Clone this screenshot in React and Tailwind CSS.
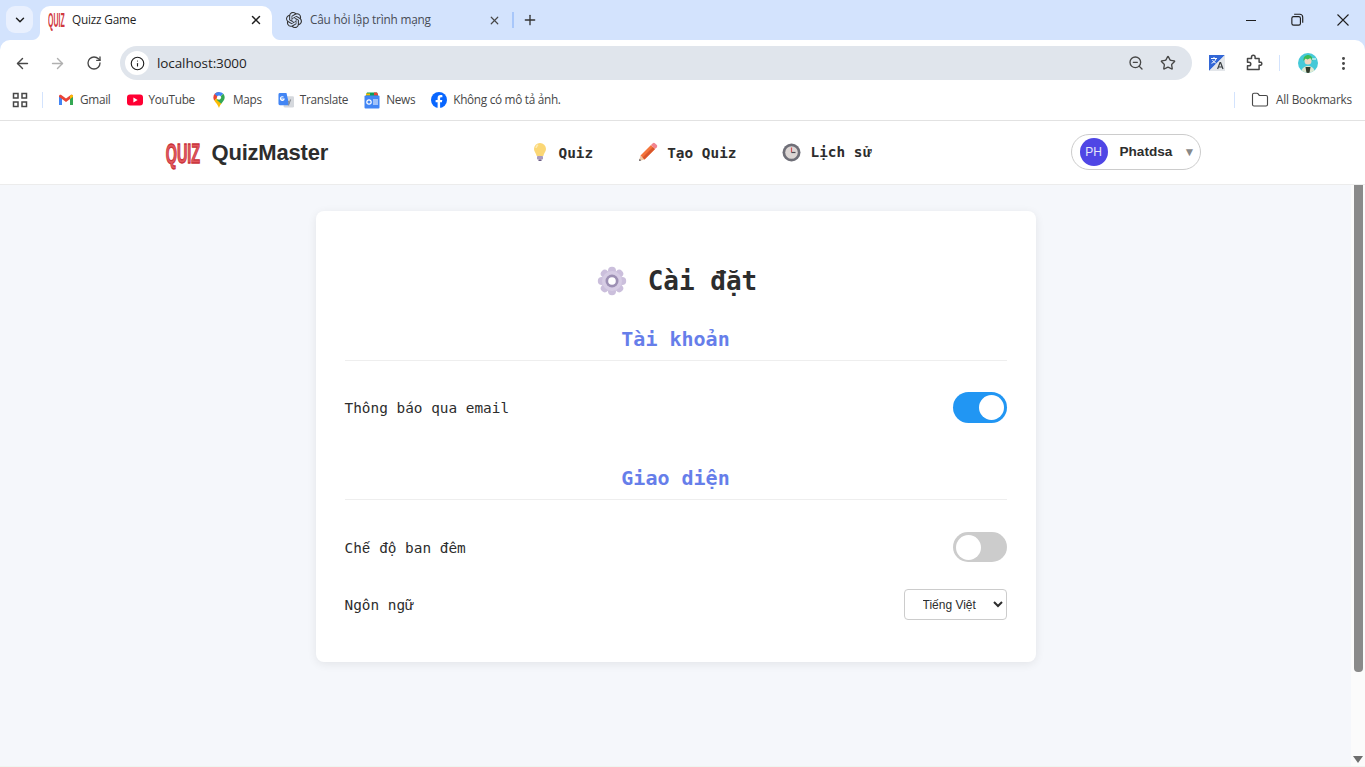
import React from "react";
import { ArrowLeft, ArrowRight, RotateCw, Info, ZoomOut, Star, EllipsisVertical, Folder, X, Plus, ChevronDown } from "lucide-react";
import { SiOpenai } from "react-icons/si";

const mono = "font-['DejaVu_Sans_Mono','Liberation_Mono',monospace]";
const viet = "font-['Liberation_Mono',monospace]";

function QuizLogo({ small }) {
  return (
    <span className={small ? "flex w-[18px] h-[18px] items-center justify-center" : "flex w-[36px] h-[24px] items-center justify-center"}>
      <span className={small
        ? "shrink-0 font-['Liberation_Sans',sans-serif] font-bold text-[#d0393e] text-[12px] leading-[14px] scale-x-[0.58] scale-y-[1.7]"
        : "shrink-0 font-['Liberation_Sans',sans-serif] font-bold text-[#e2585d] text-[20px] leading-[22px] scale-x-[0.72] scale-y-[1.4] [-webkit-text-stroke:0.9px_#c9333a]"}>
        QUIZ
      </span>
    </span>
  );
}

function Gmail() {
  return (
    <svg width="16" height="16" viewBox="0 0 16 16">
      <path d="M1 4.2V13h3V7l4 3 4-3v6h3V4.2c0-1.2-1.4-1.8-2.3-1.1L8 6.6 3.3 3.1C2.4 2.4 1 3 1 4.2z" fill="#ea4335" />
      <path d="M1 4.2V13h3V7L1.2 4.9z" fill="#4285f4" />
      <path d="M15 4.2V13h-3V7l2.8-2.1z" fill="#34a853" />
      <path d="M12 3.9V7l3-2.2v-.6c0-1.2-1.4-1.8-2.3-1.1z" fill="#fbbc04" />
    </svg>
  );
}
function YouTube() {
  return (
    <svg width="16" height="16" viewBox="0 0 16 16">
      <rect x="0" y="2.5" width="16" height="11" rx="3" fill="#ff0033" />
      <path d="M6.4 5.6v4.8L10.6 8z" fill="#fff" />
    </svg>
  );
}
function Maps() {
  return (
    <svg width="16" height="18" viewBox="0 0 16 20">
      <path d="M8 1a6.3 6.3 0 0 0-6.3 6.3c0 1.4.5 2.5 1.2 3.6L8 5.5z" fill="#ea4335" />
      <path d="M2.9 10.9C4.6 13.4 7 15.600 8 19c.6-2 1.600-3.500 2.700-5L5 8z" fill="#fbbc04" />
      <path d="M8 1c-2 0-3.700.9-4.900 2.400L8 7.500l4.700-4.400C11.500 1.800 9.800 1 8 1z" fill="#4285f4" />
      <path d="M12.700 3.100 5.600 10l4.900 4.200c1.700-2.300 3.800-4.100 3.800-6.900 0-1.600-.6-3.100-1.600-4.200z" fill="#34a853" />
      <circle cx="8" cy="7.300" r="2.300" fill="#fff" />
    </svg>
  );
}
function TranslateFav() {
  return (
    <svg width="17" height="17" viewBox="0 0 17 17">
      <rect x="6" y="4" width="11" height="12" rx="1.500" fill="#d5d8dd" />
      <path d="M2 0.500h7l3 13H2a1.500 1.500 0 0 1-1.500-1.500V2A1.500 1.500 0 0 1 2 .5z" fill="#4285f4" />
      <path d="M3 7h3.500a2 2 0 1 1-.6-2" stroke="#fff" strokeWidth="1.100" fill="none" />
      <path d="M11 9l1.200 3.200M13.500 7.500l-2.500 6" stroke="#8a8f96" strokeWidth="1.200" />
    </svg>
  );
}
function NewsFav() {
  return (
    <svg width="16" height="17" viewBox="0 0 16 17">
      <path d="M2 2.500 3 0.500h10l1 2v3H2z" fill="#0c9d58" />
      <path d="M2 1.500h4v2H2z" fill="#fbbc04" />
      <path d="M10 .5h3l1 2v1h-4z" fill="#ea4335" />
      <rect x="0.500" y="3.500" width="15" height="13" rx="1" fill="#4285f4" />
      <circle cx="5" cy="10" r="2.200" fill="none" stroke="#fff" strokeWidth="1.200" />
      <path d="M9 8h5M9 10h5M9 12h5" stroke="#fff" strokeWidth="1" />
    </svg>
  );
}
function Facebook() {
  return (
    <svg width="16" height="16" viewBox="0 0 16 16">
      <circle cx="8" cy="8" r="8" fill="#0866ff" />
      <path d="M10.900 10.300 11.300 8H9.100V6.500c0-.7.300-1.200 1.300-1.200h1V3.300s-.9-.2-1.800-.2C7.700 3.100 6.600 4.200 6.600 6.200V8h-2v2.300h2V16h2.500v-5.700z" fill="#fff" />
    </svg>
  );
}
function LangIcon() {
  return (
    <svg width="16" height="16" viewBox="0 0 16 16">
      <path d="M0 0h16L0 16z" fill="#3367d6" />
      <path d="M16 0v16H0z" fill="#e3e6ea" />
      <path d="M2 3.500h6M5 2v1.500M7 3.500C6.500 6 4.500 7.500 2.500 8.300M3.500 5c.6 1.300 2 2.500 3.300 3" stroke="#fff" strokeWidth="1" fill="none" />
      <path d="M8.600 14 11 7.500h.6L14 14M9.600 12h3.400" stroke="#3c4043" strokeWidth="1.200" fill="none" />
    </svg>
  );
}
function PuzzleIcon() {
  return (
    <svg width="18" height="18" viewBox="0 0 18 18" fill="none" stroke="#474747" strokeWidth="1.500" strokeLinejoin="round">
      <path d="M1.500 4.500h4V3a1.800 1.800 0 0 1 3.600 0v1.500h4v3.700H15a1.800 1.800 0 0 1 0 3h-1.900v4.300H1.500v-3.700H3a1.800 1.800 0 0 0 0-3.600H1.500z" />
    </svg>
  );
}
function Avatar() {
  return (
    <svg width="20" height="20" viewBox="0 0 20 20" className="rounded-full">
      <rect width="20" height="20" fill="#45c9d8" />
      <path d="M3 20c.5-5 3.500-7 7-7s6.500 2 7 7z" fill="#dfe8d2" />
      <path d="M7.500 14h5l-1 6h-3z" fill="#2f3b2b" />
      <circle cx="10" cy="8" r="3.500" fill="#f0d6bf" />
      <path d="M5.500 8c-.5-4 2-6 4.500-6s5 2 4.500 6l-2-3-3 1.500-2-1z" fill="#3cba54" />
      <path d="M14 6h4" stroke="#fff" strokeWidth="1" />
    </svg>
  );
}
function Bulb() {
  return (
    <svg width="18" height="20" viewBox="0 0 18 20">
      <path d="M9 1a6 6 0 0 0-6 6c0 2.600 2 3.700 2.700 7h6.600C13 10.700 15 9.600 15 7a6 6 0 0 0-6-6z" fill="#fbd775" />
      <path d="M7 3a4 4 0 0 0-2 3" stroke="#fdebb5" strokeWidth="1.500" fill="none" />
      <rect x="6" y="14" width="6" height="3.500" rx=".8" fill="#a99bbd" />
      <rect x="7.300" y="17.500" width="3.400" height="1.500" rx=".7" fill="#6b5d85" />
    </svg>
  );
}
function Pencil() {
  return (
    <svg width="20" height="20" viewBox="0 0 20 20">
      <path d="M1 19l1.500-5.500L6.500 17.500z" fill="#f3c9a0" />
      <path d="M1 19l.6-2.200 1.600 1.600z" fill="#5b5b66" />
      <path d="M2.500 13.500 13 3l4 4L6.500 17.500z" fill="#f4743a" />
      <path d="M4.500 15.500 15 5l2 2L6.500 17.500z" fill="#d9562a" />
      <path d="M13 3l1.800-1.800a1.500 1.500 0 0 1 2.100 0l1.900 1.900a1.500 1.500 0 0 1 0 2.100L17 7z" fill="#f2848f" />
    </svg>
  );
}
function ClockEmoji() {
  return (
    <svg width="19" height="19" viewBox="0 0 19 19">
      <circle cx="9.500" cy="9.500" r="9" fill="#6f6f78" />
      <circle cx="9.500" cy="9.500" r="6.300" fill="#dcd6d4" />
      <path d="M9.500 4.500v5" stroke="#d1535b" strokeWidth="1.200" fill="none" />
      <path d="M9.500 9.500h4" stroke="#4a4a52" strokeWidth="1.200" fill="none" />
    </svg>
  );
}
function Gear() {
  const petals = [0, 45, 90, 135, 180, 225, 270, 315];
  return (
    <svg width="30" height="30" viewBox="0 0 30 30">
      {petals.map((a) => (
        <circle key={a} cx="15" cy="4.800" r="4" fill="#cbbfdc" transform={`rotate(${a} 15 15)`} />
      ))}
      <circle cx="15" cy="15" r="10" fill="#d6cce4" />
      <circle cx="15" cy="15" r="6.500" fill="#9d90b4" />
      <circle cx="15" cy="15" r="3.800" fill="#fff" />
    </svg>
  );
}

function Bookmark({ icon, label }) {
  return (
    <div className="flex items-center gap-[6px]">
      <span className="flex w-[16px] h-[18px] items-center justify-center">{icon}</span>
      <span className="text-[11.800px] text-[#474747] font-['Open_Sans','Noto_Sans',sans-serif] tracking-[-0.3px]">{label}</span>
    </div>
  );
}

function NavItem({ icon, children }) {
  return (
    <div className="flex items-center gap-[9px]">
      <span className="flex w-[20px] justify-center">{icon}</span>
      <span className={`${mono} font-bold text-[14.4px] text-[#2d2d2d] pt-[2px]`}>{children}</span>
    </div>
  );
}

function Section({ title, children, className }) {
  return (
    <div className={className}>
      <h2 className={`${mono} font-bold text-[20px] leading-[24px] text-[#667eea] text-center pb-[9px] border-b border-[#eeeeee]`}>{title}</h2>
      {children}
    </div>
  );
}

function Toggle({ on }) {
  return (
    <div className={on
      ? "flex items-center justify-end w-[54px] h-[31px] rounded-full bg-[#2196f3] px-[3px]"
      : "flex items-center justify-start w-[54px] h-[30px] rounded-full bg-[#cccccc] px-[3px]"}>
      <span className="w-[25px] h-[25px] rounded-full bg-white" />
    </div>
  );
}

export default function App() {
  return (
    <div className="w-[1365px] h-[767px] overflow-hidden flex flex-col bg-[#d3e3fd] font-['Liberation_Sans',sans-serif]">
      {/* Tab strip */}
      <div className="h-[40px] flex items-end shrink-0 relative">
        <div className="absolute left-[6px] top-[6px] w-[27px] h-[27px] rounded-[9px] bg-[#e9f0fe] flex items-center justify-center">
          <ChevronDown size={14} strokeWidth={2.5} color="#1f1f1f" />
        </div>
        <div className="relative ml-[40px] w-[232px] h-[34px] bg-white rounded-t-[10px] flex items-center pb-[6px] pl-[7px] pr-[9px]">
          <span className="absolute left-[-8px] bottom-0 w-[8px] h-[8px] bg-[radial-gradient(circle_at_0_0,#d3e3fd_7.500px,#ffffff_8.500px)]" />
          <span className="absolute right-[-8px] bottom-0 w-[8px] h-[8px] bg-[radial-gradient(circle_at_100%_0,#d3e3fd_7.500px,#ffffff_8.500px)]" />
          <QuizLogo small />
          <span className="ml-[7px] text-[11.800px] text-[#1f1f1f] font-['Open_Sans',sans-serif] tracking-[-0.2px]">Quizz Game</span>
          <X size={14} strokeWidth={2.5} color="#1f1f1f" className="ml-auto" />
        </div>
        <div className="w-[238px] h-[34px] flex items-center pb-[6px] pl-[14px] pr-[9px]">
          <SiOpenai size={16} color="#333" />
          <span className="ml-[8px] text-[11.800px] text-[#474c55] font-['Open_Sans',sans-serif] tracking-[-0.2px]">Câu hỏi lập trình mạng</span>
          <X size={13} strokeWidth={2.2} color="#474747" className="ml-auto" />
        </div>
        <div className="w-[2px] h-[16px] mb-[12px] ml-[2px] bg-[#a8c7fa]" />
        <Plus size={16} strokeWidth={2} color="#333" className="ml-[8px] mb-[12px]" />
        <div className="ml-auto flex items-center h-[40px] pr-[14px] gap-[30px]">
          <svg width="16" height="16" viewBox="0 0 16 16"><rect x="3" y="8" width="10" height="1" fill="#1f1f1f" /></svg>
          <svg width="16" height="16" viewBox="0 0 14 14" fill="none" stroke="#1f1f1f" strokeWidth="1">
            <rect x="2.500" y="4" width="7.500" height="7.500" rx="1.500" />
            <path d="M4.500 2h5a2.500 2.500 0 0 1 2.500 2.500v5" />
          </svg>
          <svg width="16" height="16" viewBox="0 0 16 16" fill="none" stroke="#1f1f1f" strokeWidth="1.100">
            <path d="M2.500 2.500l11 11M13.500 2.500l-11 11" />
          </svg>
        </div>
      </div>

      {/* Toolbar */}
      <div className="h-[40px] shrink-0 bg-white rounded-t-[10px] flex items-center">
        <div className="flex items-center gap-[18px] pl-[14px] pt-[6px] w-[120px]">
          <ArrowLeft size={17} strokeWidth={2} color="#474747" />
          <ArrowRight size={17} strokeWidth={2} color="#b0b0b0" />
          <RotateCw size={16} strokeWidth={2} color="#474747" className="ml-[2px]" />
        </div>
        <div className="w-[1072px] h-[34px] mt-[6px] bg-[#e0e5ec] rounded-full flex items-center pl-[5px] pr-[16px]">
          <span className="w-[24px] h-[24px] rounded-full bg-white flex items-center justify-center">
            <Info size={15} strokeWidth={1.800} color="#1f1f1f" />
          </span>
          <span className="ml-[8px] text-[13.500px] text-[#1f1f1f] font-['Open_Sans',sans-serif] tracking-[-0.1px]">localhost:3000</span>
          <ZoomOut size={16} strokeWidth={2} color="#474747" className="ml-auto" />
          <Star size={16} strokeWidth={2} color="#474747" className="ml-[16px]" />
        </div>
        <div className="flex-1 flex items-center pl-[17px] pt-[6px]">
          <LangIcon />
          <span className="ml-[21px]"><PuzzleIcon /></span>
          <span className="ml-[15px] w-[1px] h-[16px] bg-[#d3e3fd]" />
          <span className="ml-[18px]"><Avatar /></span>
          <EllipsisVertical size={17} strokeWidth={2.2} color="#474747" className="ml-[17px]" />
        </div>
      </div>

      {/* Bookmarks */}
      <div className="h-[41px] shrink-0 bg-white border-b border-[#e2e2e2] flex items-center">
        <svg width="16" height="16" viewBox="0 0 16 16" fill="none" stroke="#474747" strokeWidth="1.500" className="ml-[12px]">
          <rect x="1.500" y="1.500" width="4.500" height="4.500" /><rect x="10" y="1.500" width="4.500" height="4.500" />
          <rect x="1.500" y="10" width="4.500" height="4.500" /><rect x="10" y="10" width="4.500" height="4.500" />
        </svg>
        <span className="ml-[14px] w-[1px] h-[16px] bg-[#d3e3fd]" />
        <div className="ml-[15px] flex items-center gap-[16px]">
          <Bookmark icon={<Gmail />} label="Gmail" />
          <Bookmark icon={<YouTube />} label="YouTube" />
          <Bookmark icon={<Maps />} label="Maps" />
          <Bookmark icon={<TranslateFav />} label="Translate" />
          <Bookmark icon={<NewsFav />} label="News" />
          <Bookmark icon={<Facebook />} label="Không có mô tả ảnh." />
        </div>
        <span className="ml-auto w-[1px] h-[16px] bg-[#d3e3fd]" />
        <Folder size={18} strokeWidth={1.500} color="#474747" className="ml-[16px]" />
        <span className="ml-[7px] mr-[13px] text-[11.800px] text-[#474747] font-['Open_Sans',sans-serif] tracking-[-0.2px]">All Bookmarks</span>
      </div>

      {/* App header */}
      <header className="h-[64px] shrink-0 bg-white border-b border-[#ececec] flex justify-center">
        <div className="w-[1036px] flex items-center justify-between">
          <div className="flex items-center gap-[11px]">
            <QuizLogo />
            <span className="text-[22px] font-bold text-[#2d2d2d] tracking-[-0.2px]">QuizMaster</span>
          </div>
          <nav className="flex items-center gap-[45px] ml-[2px]">
            <NavItem icon={<Bulb />}>Quiz</NavItem>
            <NavItem icon={<Pencil />}>Tạo Quiz</NavItem>
            <NavItem icon={<ClockEmoji />}>Lịch s<span className={viet}>ử</span></NavItem>
          </nav>
          <div className="w-[130px] h-[36px] mb-[2px] rounded-full border border-[#cccccc] flex items-center pl-[8px]">
            <span className="w-[28px] h-[28px] rounded-full bg-[#4f46e5] text-[#e6e6fa] text-[12px] flex items-center justify-center">PH</span>
            <span className="ml-[12px] mt-[2px] text-[13.600px] font-bold text-[#2d2d2d]">Phatdsa</span>
            <span className="ml-[11px] text-[12px] text-[#888888]">▼</span>
          </div>
        </div>
      </header>

      {/* Page */}
      <div className="flex-1 flex min-h-0 bg-[#f5f7fb] border-b border-[#eef6f0]">
        <main className="flex-1 flex justify-center items-start pt-[26px]">
          <div className="w-[720px] h-[451px] bg-white rounded-[8px] shadow-[0_2px_10px_rgba(0,0,0,0.08)] px-[29px] pt-[51px]">
            <h1 className={`${mono} font-bold text-[26px] leading-[38px] text-[#2d2d2d] flex items-center justify-center gap-[21px] ml-[3px]`}>
              <Gear />
              <span>Cài đặt</span>
            </h1>
            <Section title="Tài khoản" className="mt-[27px]">
              <div className="flex items-center justify-between mt-[31px]">
                <span className={`${mono} text-[14.400px] text-[#2d2d2d] pt-[2px]`}>Thông báo qua email</span>
                <Toggle on />
              </div>
            </Section>
            <Section title="Giao diện" className="mt-[43px]">
              <div className="flex items-center justify-between mt-[32px]">
                <span className={`${mono} text-[14.400px] text-[#2d2d2d] pt-[4px]`}>Ch<span className={viet}>ế</span> độ ban đêm</span>
                <Toggle />
              </div>
              <div className="flex items-center justify-between mt-[27px]">
                <span className={`${mono} text-[14.400px] text-[#2d2d2d] pt-[2px]`}>Ngôn ngữ</span>
                <select defaultValue="vi" className="w-[103px] h-[31px] border border-[#cccccc] rounded-[4px] bg-white text-[12px] text-[#2d2d2d] pl-[14px] font-['Liberation_Sans',sans-serif]">
                  <option value="vi">Tiếng Việt</option>
                </select>
              </div>
            </Section>
          </div>
        </main>
        <div className="w-[14px] bg-[#fbfbfb] flex flex-col items-center">
          <div className="w-[9px] h-[487px] bg-[#8a8a8a] rounded-b-[4px]" />
          <div className="mt-auto mb-[3px] w-0 h-0 border-x-[5px] border-x-transparent border-t-[7px] border-t-[#6e6e6e]" />
        </div>
      </div>
    </div>
  );
}
